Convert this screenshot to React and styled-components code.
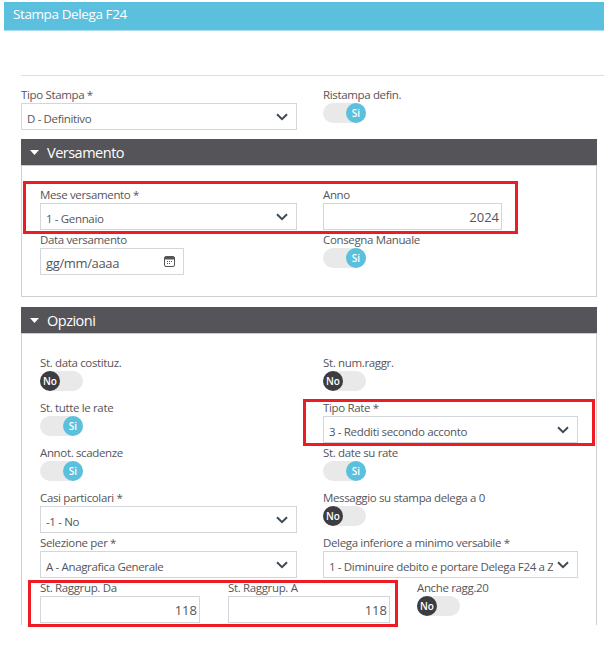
import React from "react";
import styled, { createGlobalStyle } from "styled-components";

const Global = createGlobalStyle`
  html, body {
    margin: 0;
    background: #fff;
  }
  * {
    box-sizing: border-box;
  }
`;

const Page = styled.div`
  width: 604px;
  height: 646px;
  overflow: hidden;
  padding-top: 2px;
  font-family: "Open Sans", "Liberation Sans", sans-serif;
  font-size: 11.5px;
  letter-spacing: -0.35px;
  color: #55555a;
`;

const Header = styled.div`
  margin-left: 4px;
  height: 29px;
  background: #5bc0de;
  border-bottom: 1px solid #a9dcec;
  color: #fff;
  font-size: 13.5px;
  letter-spacing: -0.4px;
  line-height: 25px;
  padding-left: 9px;
`;

const Form = styled.div`
  margin: 44px 0 0 21px;
  border-top: 1px solid #ddd;
  padding-top: 9px;
`;

const Row = styled.div`
  position: relative;
  display: flex;
  height: ${(p) => p.$height || 45}px;
`;

const Field = styled.div`
  width: ${(p) => p.$width}px;
  flex: none;
`;

const Label = styled.div`
  height: 18px;
  line-height: 19px;
  white-space: nowrap;
`;

const Box = styled.div`
  height: 27px;
  border: 1px solid #d3d6da;
  background: #fff;
  display: flex;
  align-items: center;
  gap: 4px;
  padding: 0 ${(p) => (p.$right ? 2 : 8)}px 0 5px;
  justify-content: ${(p) => (p.$right ? "flex-end" : "space-between")};
  white-space: nowrap;
  overflow: hidden;
`;

const BoxText = styled.span`
  overflow: hidden;
  flex: ${(p) => (p.$fill ? 1 : "none")};
  font-size: ${(p) => p.$size || 11.5}px;
  padding-top: ${(p) => p.$drop || 0}px;
  letter-spacing: ${(p) => (p.$digits ? "0" : "inherit")};
`;

const Toggle = styled.div`
  position: relative;
  width: 43px;
  height: 20px;
  border-radius: 10px;
  background: #e9e9e9;
`;

const Knob = styled.div`
  position: absolute;
  top: 0;
  left: ${(p) => (p.$on ? 23 : 0)}px;
  width: 20px;
  height: 20px;
  border-radius: 50%;
  background: ${(p) => (p.$on ? "#5bc0de" : "#3c3c41")};
  color: #fff;
  font-size: 10px;
  font-weight: 600;
  letter-spacing: 0;
  line-height: 20px;
  text-align: center;
`;

const Section = styled.div`
  width: 576px;
  margin-bottom: 10px;
`;

const SectionBar = styled.div`
  height: 27px;
  background: #555559;
  border-bottom: 1px solid #ccc;
  display: flex;
  align-items: center;
  gap: 8px;
  padding-left: 9px;
  color: #fff;
  font-size: 14.5px;
  letter-spacing: -0.5px;
`;

const Caret = styled.svg`
  width: 9px;
  height: 5px;
  fill: #fff;
`;

const Panel = styled.div`
  border: 1px solid #d0d0d0;
  border-top: 0;
  border-bottom: ${(p) => (p.$open ? 0 : "1px solid #d0d0d0")};
  height: ${(p) => p.$height}px;
  padding: ${(p) => p.$top}px 0 0 18px;
`;

const Highlight = styled.div`
  position: absolute;
  left: ${(p) => p.$left}px;
  top: ${(p) => p.$top}px;
  width: ${(p) => p.$width}px;
  height: ${(p) => p.$h}px;
  border: 3px solid #ed1c24;
  pointer-events: none;
`;

const Gap = styled.div`
  width: ${(p) => p.$width}px;
  flex: none;
`;

const ChevronIcon = styled.svg`
  flex: none;
  fill: none;
  stroke: #3f4a55;
  stroke-width: 2;
`;

const Chevron = () => (
  <ChevronIcon width="12" height="8" viewBox="0 0 12 8">
    <path d="M1 1.2l5 5 5-5" />
  </ChevronIcon>
);

const Calendar = () => (
  <svg width="11" height="11" viewBox="0 0 11 11">
    <rect x="0.5" y="0.5" width="10" height="10" rx="1.5" fill="none" stroke="#555" />
    <rect x="1" y="1" width="9" height="2.5" fill="#555" />
    <path d="M3 5h1v1H3zM5 5h1v1H5zM7 5h1v1H7zM3 7h1v1H3zM5 7h1v1H5z" fill="#555" />
  </svg>
);

const SelectField = ({ label, value, width }) => (
  <Field $width={width}>
    <Label>{label}</Label>
    <Box>
      <BoxText $fill $drop={4}>{value}</BoxText>
      <Chevron />
    </Box>
  </Field>
);

const NumberField = ({ label, value, width }) => (
  <Field $width={width}>
    <Label>{label}</Label>
    <Box $right>
      <BoxText $size={13} $digits>{value}</BoxText>
    </Box>
  </Field>
);

const ToggleField = ({ label, on, width }) => (
  <Field $width={width}>
    <Label>{label}</Label>
    <Toggle>
      <Knob $on={on}>{on ? "Si" : "No"}</Knob>
    </Toggle>
  </Field>
);

const SectionHead = ({ title }) => (
  <SectionBar>
    <Caret viewBox="0 0 9 5">
      <path d="M0 0h9L4.5 5z" />
    </Caret>
    {title}
  </SectionBar>
);

export default function App() {
  return (
    <Page>
      <Global />
      <Header>Stampa Delega F24</Header>
      <Form>
        <Row $height={54}>
          <SelectField label="Tipo Stampa *" value="D - Definitivo" width={276} />
          <Gap $width={26} />
          <ToggleField label="Ristampa defin." on width={120} />
        </Row>
        <Section>
          <SectionHead title="Versamento" />
          <Panel $height={131} $top={19}>
            <Row>
              <SelectField label="Mese versamento *" value="1 - Gennaio" width={257} />
              <Gap $width={26} />
              <NumberField label="Anno" value="2024" width={179} />
              <Highlight $left={-17} $top={-4} $width={495} $h={53} />
            </Row>
            <Row>
              <Field $width={144}>
                <Label>Data versamento</Label>
                <Box>
                  <BoxText $fill $size={13} $drop={2}>gg/mm/aaaa</BoxText>
                  <Calendar />
                </Box>
              </Field>
              <Gap $width={139} />
              <ToggleField label="Consegna Manuale" on width={150} />
            </Row>
          </Panel>
        </Section>
        <Section>
          <SectionHead title="Opzioni" />
          <Panel $open $height={291} $top={19}>
            <Row>
              <ToggleField label="St. data costituz." width={283} />
              <ToggleField label="St. num.raggr." width={150} />
            </Row>
            <Row>
              <ToggleField label="St. tutte le rate" on width={283} />
              <SelectField label="Tipo Rate *" value="3 - Redditi secondo acconto" width={255} />
              <Highlight $left={263} $top={1} $width={292} $h={47} />
            </Row>
            <Row>
              <ToggleField label="Annot. scadenze" on width={283} />
              <ToggleField label="St. date su rate" on width={150} />
            </Row>
            <Row>
              <SelectField label="Casi particolari *" value="-1 - No" width={257} />
              <Gap $width={26} />
              <ToggleField label="Messaggio su stampa delega a 0" width={250} />
            </Row>
            <Row>
              <SelectField label="Selezione per *" value="A - Anagrafica Generale" width={257} />
              <Gap $width={26} />
              <SelectField label="Delega inferiore a minimo versabile *" value="1 - Diminuire debito e portare Delega F24 a Z" width={255} />
            </Row>
            <Row>
              <NumberField label="St. Raggrup. Da" value="118" width={160} />
              <Gap $width={28} />
              <NumberField label="St. Raggrup. A" value="118" width={162} />
              <Gap $width={27} />
              <ToggleField label="Anche ragg.20" width={120} />
              <Highlight $left={-12} $top={2} $width={370} $h={47} />
            </Row>
          </Panel>
        </Section>
      </Form>
    </Page>
  );
}
